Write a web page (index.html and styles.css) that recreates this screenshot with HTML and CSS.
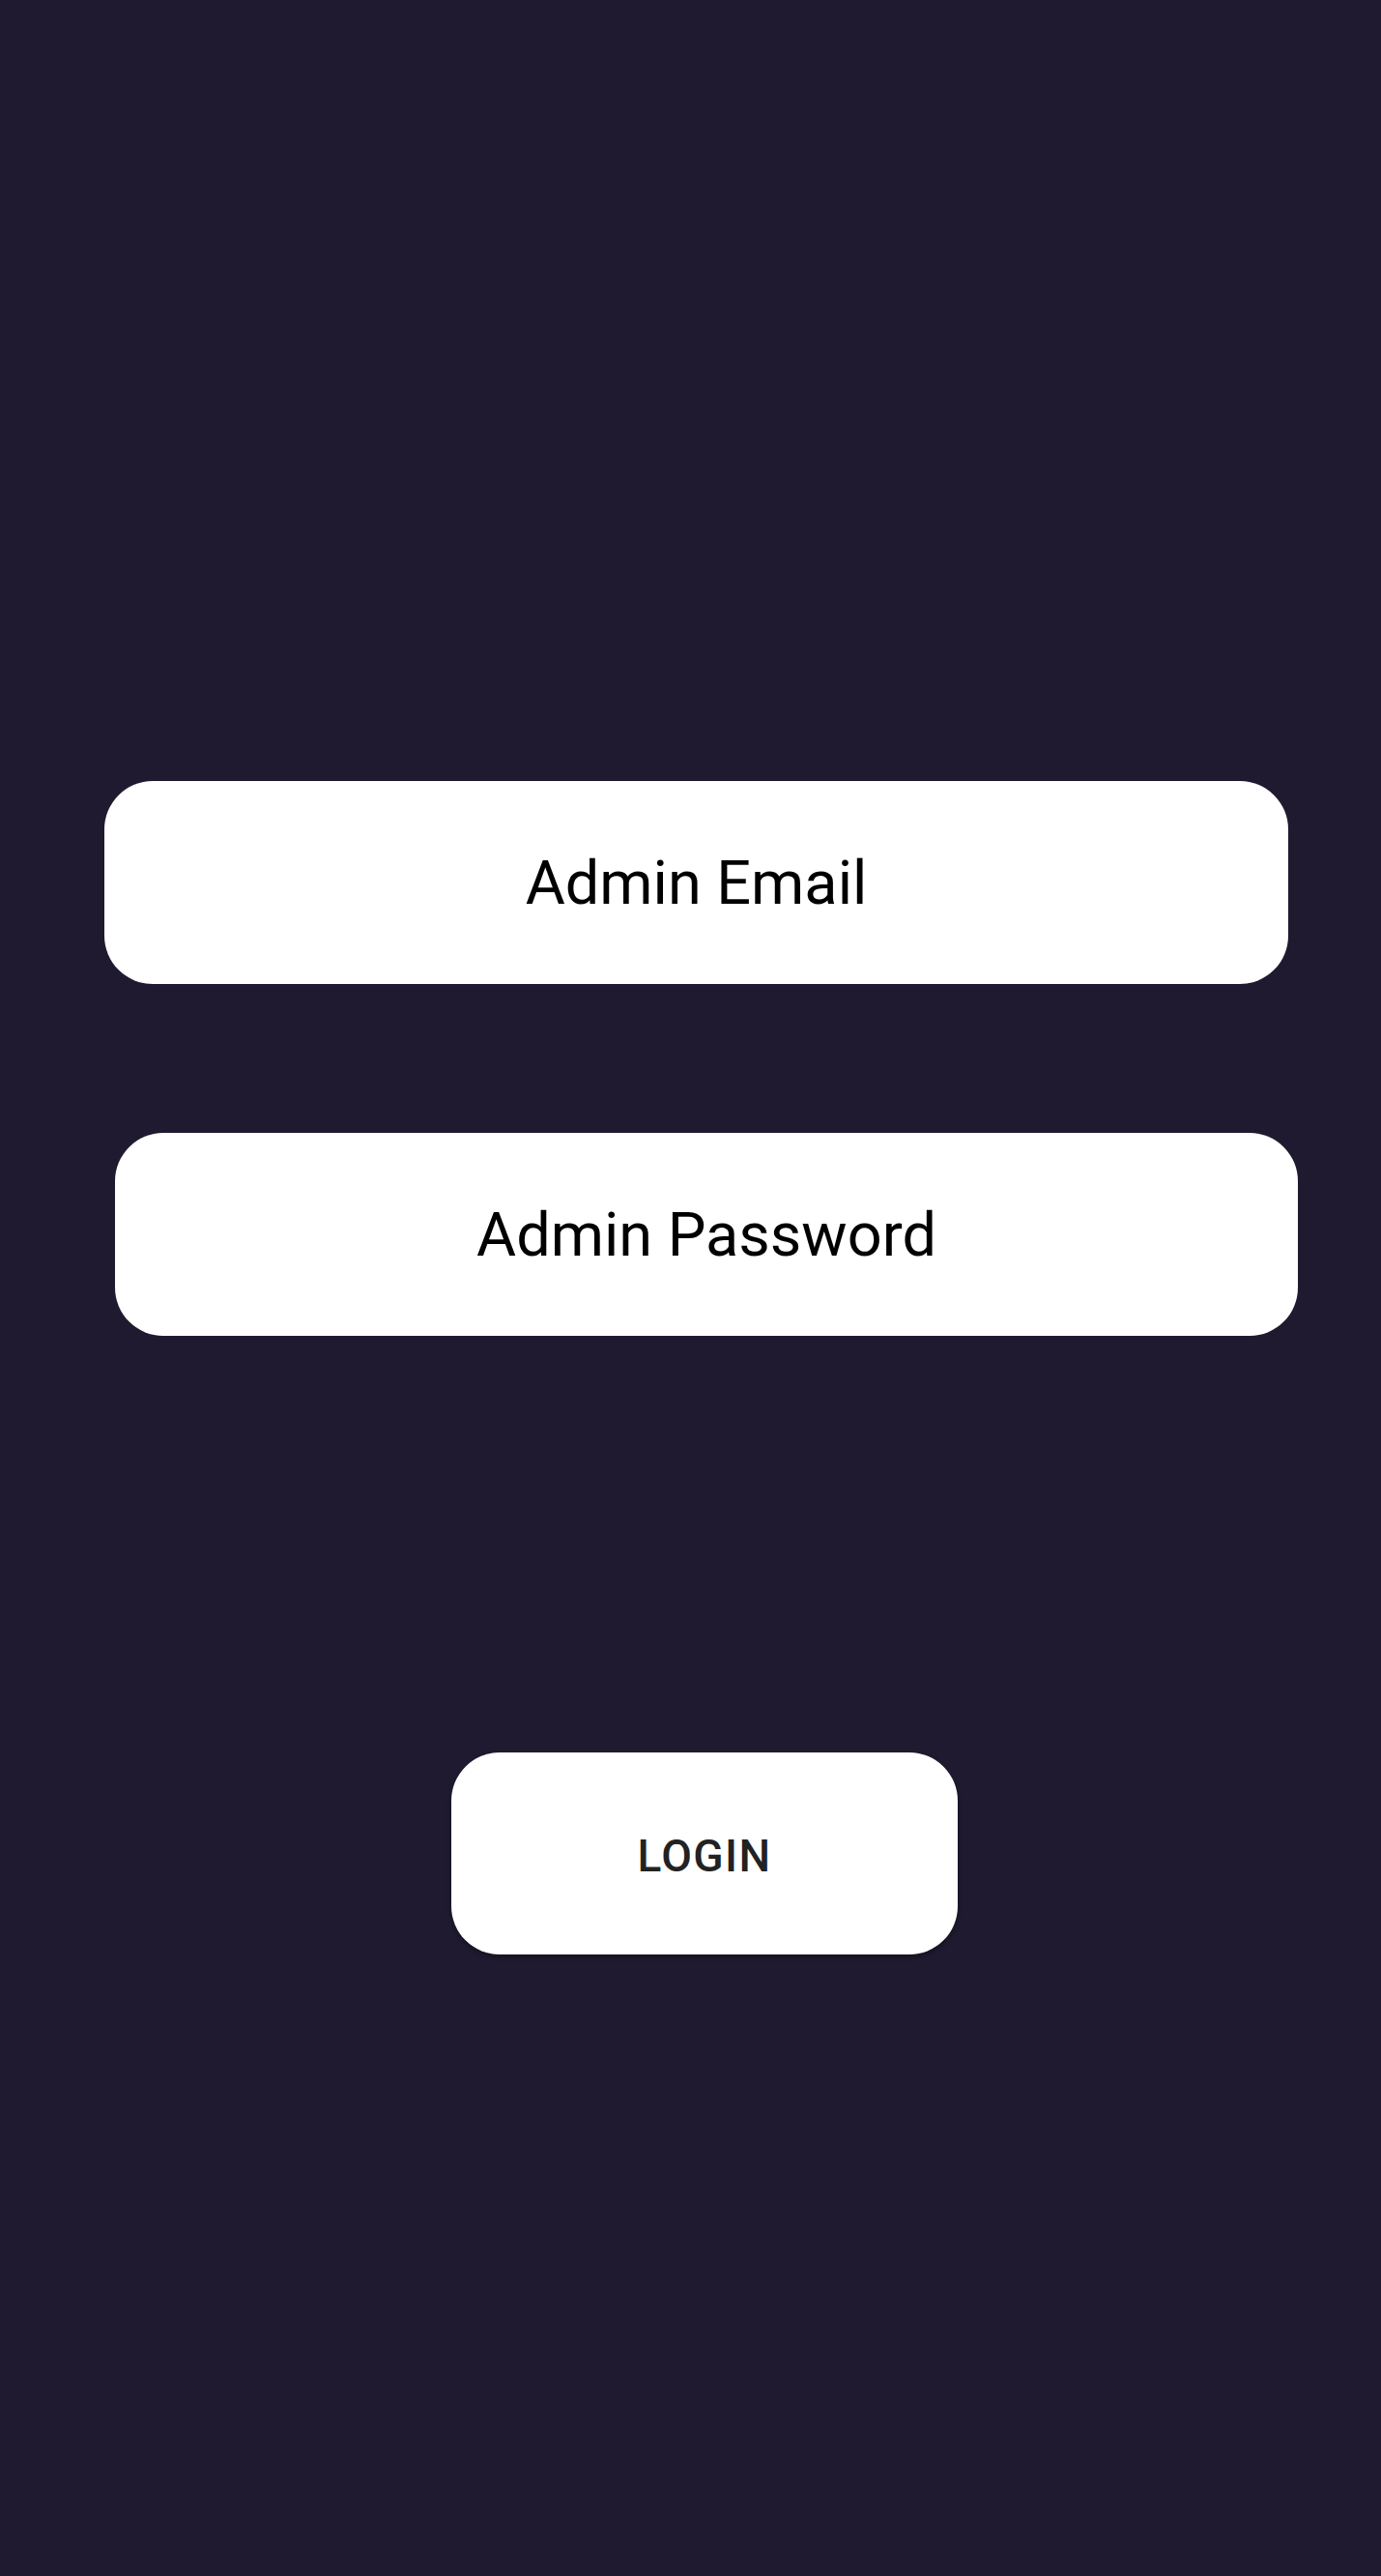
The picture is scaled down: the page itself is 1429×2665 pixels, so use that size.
FILE: index.html
```html
<!DOCTYPE html>
<html lang="en">
<head>
<meta charset="utf-8">
<title>Admin Login</title>
<link rel="stylesheet" href="styles.css">
</head>
<body>
<main class="screen">
  <div class="field field-email">Admin Email</div>
  <div class="field field-password">Admin Password</div>
  <div class="login-btn">LOGIN</div>
</main>
</body>
</html>
```

FILE: styles.css
```css
html, body {
  margin: 0;
  padding: 0;
  background: #1f1a2f;
}
.screen {
  min-height: 2665px;
  box-sizing: border-box;
  padding-top: 808px;
  display: flex;
  flex-direction: column;
  align-items: flex-start;
  font-family: Roboto, "Liberation Sans", sans-serif;
}
.field {
  height: 210px;
  background: #ffffff;
  border-radius: 50px;
  display: flex;
  align-items: center;
  justify-content: center;
  font-size: 63px;
  font-weight: 400;
  color: #000000;
}
.field-email {
  margin-left: 108px;
  width: 1225px;
}
.field-password {
  margin-top: 154px;
  margin-left: 119px;
  width: 1224px;
}
.login-btn {
  margin-top: 431px;
  margin-left: 467px;
  width: 524px;
  height: 209px;
  box-sizing: border-box;
  padding-top: 4px;
  background: #ffffff;
  border-radius: 50px;
  display: flex;
  align-items: center;
  justify-content: center;
  font-size: 46px;
  font-weight: 500;
  color: #222222;
  letter-spacing: 1.4px;
  box-shadow: 0 3px 5px rgba(0, 0, 0, 0.3);
}
```
